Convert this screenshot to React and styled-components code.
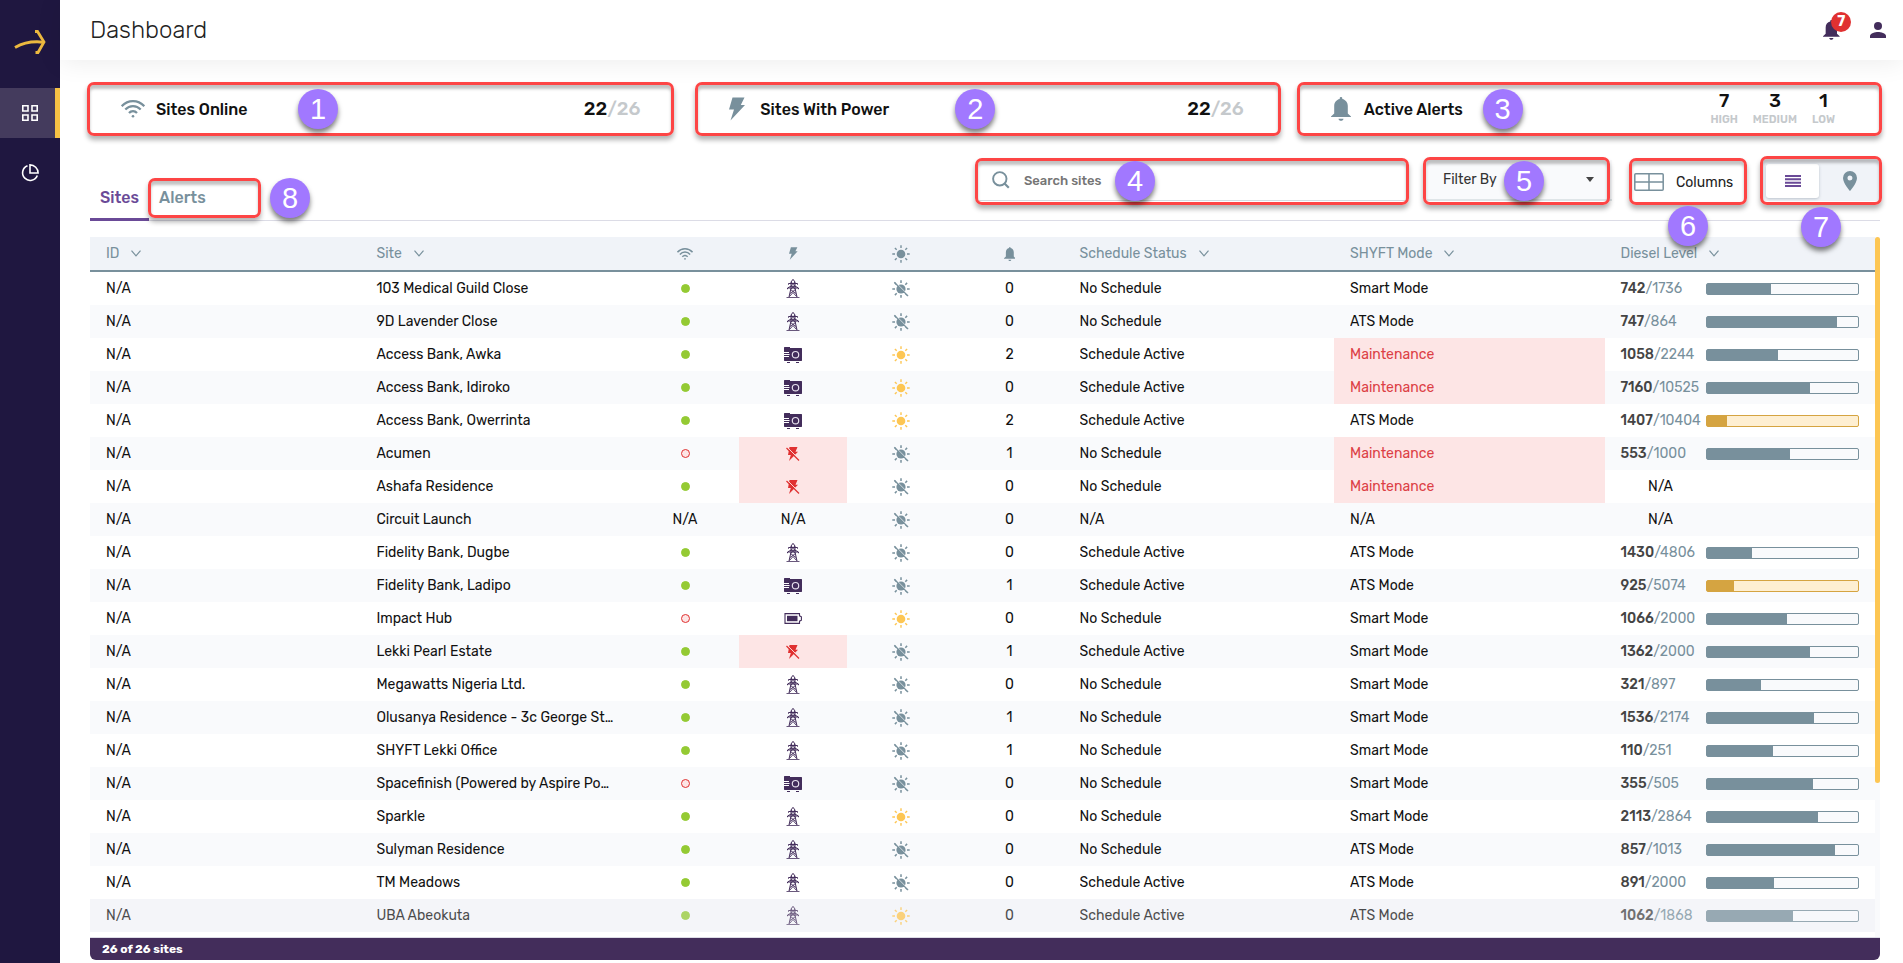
import React, { useState } from "react";
import styled, { createGlobalStyle, css } from "styled-components";

const colors = {
  night: "#1f1740",
  plum: "#432d5b",
  purple: "#6a4a97",
  slate: "#78909c",
  amber: "#f7c244",
  red: "#e03131",
  pink: "#fde5e5",
  stripe: "#f9fafc",
  panel: "#f0f3f8",
  line: "#dcdce6",
};

const GlobalStyle = createGlobalStyle`
  * { box-sizing: border-box; }
  body {
    margin: 0;
    background: #fff;
    color: #111;
    font-family: Rubik, Roboto, "Liberation Sans", sans-serif;
    font-size: 14px;
  }
  button, input, select {
    margin: 0;
    padding: 0;
    border: 0;
    background: none;
    color: inherit;
    font: inherit;
  }
  button { cursor: pointer; }
  svg { display: block; flex: none; }
`;

/* ---------- icons ---------- */

const LogoIcon = () => (
  <svg width="32" height="24" viewBox="0 0 32 24" fill="none" stroke="#ecb93f">
    <path d="M1 17.500C9 13 18 11 29 12.200" strokeWidth="3" />
    <path d="M21 1.500h2.500L30 12l-6 10.500h-2.500" strokeWidth="2.800" />
  </svg>
);

const GridIcon = () => (
  <svg width="16" height="16" viewBox="0 0 16 16" fill="none" stroke="#fff" strokeWidth="1.600">
    <path d="M.8.800h5.200v5.200H.8zM10 .8h5.200v5.200H10zM.8 10h5.200v5.200H.8zM10 10h5.200v5.200H10z" />
  </svg>
);

const PieIcon = () => (
  <svg width="18" height="18" viewBox="0 0 18 18" fill="none" stroke="#fff" strokeWidth="1.600">
    <path d="M6.500 1.700A7.600 7.600 0 1 0 16.300 11.500" />
    <path d="M9 .9V9h8.100A8.100 8.100 0 0 0 9 .9z" />
  </svg>
);

const WifiIcon = ({ size = 24 }) => (
  <svg width={size} height={(size * 3) / 4} viewBox="0 0 24 18" fill="none" stroke={colors.slate} strokeWidth="2.200">
    <path d="M.7 6.200C7-.6 17-.6 23.300 6.200" />
    <path d="M4.300 9.600c4.300-4.600 11.100-4.600 15.400 0" />
    <path d="M8 13c2.200-2.500 5.800-2.500 8 0" />
    <circle cx="12" cy="16.200" r="1.300" fill={colors.slate} stroke="none" />
  </svg>
);

const BoltIcon = ({ size = 24 }) => (
  <svg width={(size * 2) / 3} height={size} viewBox="0 0 16 24" fill={colors.slate}>
    <path d="M3.500.500h12L11.800 8H16L1.500 23.500 5 12.500H0z" />
  </svg>
);

const BellIcon = ({ size = 24, color = colors.slate }) => (
  <svg width={(size * 5) / 6} height={size} viewBox="0 0 20 24" fill={color}>
    <path d="M10 0c.8 0 1.300.6 1.300 1.400v.5c3.400.7 5.500 3.600 5.500 7v7.500l3.200 3.100v.6H0v-.6l3.200-3.100V8.900c0-3.400 2.100-6.300 5.500-7v-.5C8.700.6 9.200 0 10 0zM7.500 21.700h5C12.300 23 11.300 23.800 10 23.800S7.700 23 7.500 21.700z" />
  </svg>
);

const PersonIcon = () => (
  <svg width="16" height="16" viewBox="0 0 16 16" fill={colors.plum}>
    <circle cx="8" cy="4" r="4" />
    <path d="M0 16v-2c0-2.700 5.300-4 8-4s8 1.300 8 4v2z" />
  </svg>
);

const SearchIcon = () => (
  <svg width="18" height="18" viewBox="0 0 18 18" fill="none" stroke={colors.slate} strokeWidth="1.900">
    <circle cx="7.800" cy="7.800" r="6.700" />
    <path d="M12.500 12.500l4.300 4.300" strokeWidth="2.200" />
  </svg>
);

const ColumnsIcon = () => (
  <svg width="30" height="18" viewBox="0 0 30 18" fill="none" stroke={colors.slate} strokeWidth="1.500">
    <rect x=".8" y=".8" width="28.400" height="16.400" rx="1" />
    <path d="M15 1v16M1 9h28" />
  </svg>
);

const ListIcon = () => (
  <svg width="16" height="12" viewBox="0 0 16 12" fill={colors.purple}>
    <path d="M0 0h16v2H0zM0 3.300h16v2H0zM0 6.700h16v2H0zM0 10h16v2H0z" />
  </svg>
);

const PinIcon = () => (
  <svg width="14" height="20" viewBox="0 0 14 20" fill={colors.slate}>
    <path fillRule="evenodd" d="M7 0a7 7 0 0 1 7 7c0 5.200-7 13-7 13S0 12.200 0 7a7 7 0 0 1 7-7zm0 4.500a2.500 2.500 0 1 0 0 5 2.500 2.500 0 0 0 0-5z" />
  </svg>
);

const ChevronIcon = () => (
  <svg width="10" height="7" viewBox="0 0 10 7" fill="none" stroke={colors.slate} strokeWidth="1.200">
    <path d="M.5.700L5 5.800 9.500.7" />
  </svg>
);

const CaretIcon = () => (
  <svg width="8" height="5" viewBox="0 0 8 5" fill="#444">
    <path d="M0 0h8L4 5z" />
  </svg>
);

const rays =
  "M9 .3v2.700M9 15v2.700M.3 9H3M15 9h2.700M2.900 2.900l1.800 1.800M13.300 13.300l1.800 1.800M15.100 2.900l-1.800 1.800M4.700 13.300l-1.800 1.800";

const SunIcon = ({ color = "#fdc653" }) => (
  <svg width="18" height="18" viewBox="0 0 18 18" stroke={color} strokeWidth="1.400">
    <circle cx="9" cy="9" r="4.300" fill={color} stroke="none" />
    <path d={rays} />
  </svg>
);

const SunOffIcon = ({ backdrop }) => (
  <svg width="18" height="18" viewBox="0 0 18 18" stroke={colors.slate} strokeWidth="1.500">
    <circle cx="9" cy="9" r="4.600" fill={colors.slate} stroke="none" />
    <path d={rays} />
    <path d="M4.300 3.100L15.800 14.600" stroke={backdrop} strokeWidth="1" />
    <path d="M2.300 2.300l13.800 13.800" strokeWidth="1.300" />
  </svg>
);

const PylonIcon = () => (
  <svg width="14" height="19" viewBox="0 0 14 19" fill="none" stroke={colors.plum} strokeWidth="1">
    <path d="M7 .3L5 3v6L3 18M7 .3L9 3v6l2 9" />
    <path d="M2.500 4.500h9M2.500 4.500v1.200M11.500 4.500v1.200M1.500 9h11M1.500 9v1.200M12.500 9v1.200M2 8.700l3-1.500h4l3 1.500" />
    <path d="M5 3l4 3.500M9 3L5 6.500M5 6.500L9 10M9 6.500L5 10M4.500 10.500l5.500 4M9.500 10.500l-5.500 4M3.500 17.500l3.500-4 3.500 4" strokeWidth=".9" />
    <path d="M.5 18.500h13" strokeWidth=".8" />
  </svg>
);

const GeneratorIcon = () => (
  <svg width="18" height="16" viewBox="0 0 18 16" fill={colors.plum}>
    <path d="M.5 0H6v1h11.500l.5.500v12l-.5.500H.5l-.5-.5V.5zM3 14.900h3v1H3zM12 14.900h3v1h-3z" />
    <path d="M0 5.500h5M0 7.500h5.500M0 9.500h5" stroke="#fff" strokeWidth="1" />
    <circle cx="11.500" cy="7.700" r="3.200" fill="none" stroke="#e8e2ee" strokeWidth="1.200" />
  </svg>
);

const BatteryIcon = () => (
  <svg width="18" height="11" viewBox="0 0 18 11">
    <path d="M1 .6h14.500v2.200l1.900 1v3.400l-1.900 1v2.200H1z" fill="none" stroke={colors.plum} strokeWidth="1.100" />
    <path d="M3 2.800h10.500v5.400H3z" fill={colors.plum} />
  </svg>
);

const BoltOffIcon = () => (
  <svg width="14" height="14" viewBox="0 0 14 14">
    <path d="M3.500 0H11.500L9.500 4.800h2.500L3 14l1.800-6H2z" fill={colors.red} />
    <path d="M1.500.500l12.500 12.500" stroke={colors.pink} strokeWidth="1" />
    <path d="M.5 1l12.500 12.500" stroke={colors.red} strokeWidth="1.200" />
  </svg>
);

/* ---------- numbered callouts ---------- */

const Frame = styled.div`
  position: absolute;
  inset: ${({ $inset }) => $inset};
  z-index: 2;
  border: 3px solid #fd4545;
  border-radius: 7px;
  box-shadow: 0 4px 5px rgba(0, 0, 0, 0.3), inset 0 4px 3px rgba(0, 0, 0, 0.24);
  pointer-events: none;
`;

const Badge = styled.div`
  position: absolute;
  left: ${({ $left }) => $left}px;
  top: ${({ $top }) => $top}px;
  z-index: 3;
  width: 40px;
  height: 40px;
  border-radius: 50%;
  background: #a178ff;
  box-shadow: 0 4px 5px rgba(0, 0, 0, 0.5);
  color: #fff;
  font: 29px/41px "Liberation Sans", Arial, sans-serif;
  text-align: center;
  pointer-events: none;
`;

const Callout = ({ n, inset, left, top }) => (
  <>
    <Frame $inset={inset} />
    <Badge $left={left} $top={top}>
      {n}
    </Badge>
  </>
);

/* ---------- shell ---------- */

const Page = styled.div`
  display: flex;
  min-height: 100vh;
`;

const Sidebar = styled.nav`
  flex: none;
  width: 60px;
  display: flex;
  flex-direction: column;
  gap: 10px;
  background: ${colors.night};
`;

const Brand = styled.a`
  display: flex;
  justify-content: center;
  height: 78px;
  padding-top: 30px;
`;

const NavLink = styled.a`
  display: flex;
  align-items: center;
  justify-content: center;
  height: 50px;
  ${({ $active }) =>
    $active &&
    css`
      background: #443b5d;
      box-shadow: inset -5px 0 ${colors.amber};
    `}
`;

const Main = styled.main`
  flex: 1;
  min-width: 0;
`;

const Header = styled.header`
  display: flex;
  align-items: center;
  height: 60px;
  padding: 0 17px 0 30px;
  box-shadow: 0 2px 26px rgba(0, 0, 0, 0.08);
`;

const Title = styled.h1`
  flex: 1;
  margin: 0;
  font-size: 24px;
  font-weight: 300;
  line-height: 28px;
  color: #222;
`;

const HeaderActions = styled.div`
  display: flex;
  align-items: center;
  gap: 30px;
`;

const HeaderButton = styled.button`
  position: relative;
`;

const Count = styled.span`
  position: absolute;
  left: 8px;
  top: -8px;
  width: 20px;
  border-radius: 50%;
  background: ${colors.red};
  color: #fff;
  font-size: 14px;
  font-weight: 700;
  line-height: 20px;
`;

const Content = styled.div`
  padding: 24px 23px 3px 30px;
`;

/* ---------- stat cards ---------- */

const Stats = styled.section`
  display: grid;
  grid-template-columns: repeat(3, 1fr);
  gap: 20px;
`;

const Card = styled.div`
  position: relative;
  display: flex;
  align-items: center;
  gap: ${({ $gap }) => $gap}px;
  height: 50px;
  padding: 0 33px 0 ${({ $indent }) => $indent}px;
`;

const CardTitle = styled.h2`
  flex: 1;
  margin: 0;
  font-size: 16px;
  font-weight: 500;
`;

const Figure = styled.strong`
  font-size: 19px;
  font-weight: 500;
  line-height: 20px;
`;

const Muted = styled.span`
  color: #c5c9cc;
`;

const Severities = styled.div`
  display: flex;
  gap: 15px;
  padding-right: 12px;
`;

const Severity = styled.div`
  display: flex;
  flex-direction: column;
  align-items: center;
  gap: 2px;
`;

const SeverityLabel = styled.span`
  color: #c5c9cc;
  font-size: 11px;
  font-weight: 600;
  line-height: 14px;
`;

/* ---------- toolbar ---------- */

const Toolbar = styled.div`
  display: flex;
  align-items: flex-end;
  justify-content: space-between;
  margin: 26px 0 16px;
  border-bottom: 1px solid ${colors.line};
`;

const Tabs = styled.div`
  display: flex;
  margin-bottom: -1px;
`;

const Tab = styled.div`
  position: relative;
`;

const TabButton = styled.button`
  height: 44px;
  padding: 0 10px;
  border-bottom: 3px solid ${({ $active }) => ($active ? colors.purple : "transparent")};
  color: ${({ $active }) => ($active ? colors.purple : colors.slate)};
  font-size: 16px;
  font-weight: 500;
`;

const Tools = styled.div`
  flex: 1;
  display: flex;
  justify-content: flex-end;
  gap: 20px;
  height: 41px;
  margin: 0 0 19px 120px;
`;

const SearchBox = styled.div`
  position: relative;
  flex: 0 1 428px;
  display: flex;
  align-items: center;
  gap: 14px;
  padding-left: 13px;
  border-bottom: 1px solid #d3dce2;
`;

const SearchInput = styled.input`
  flex: 1;
  min-width: 0;
  font-size: 13px;
  font-weight: 500;
  outline: none;
  &::placeholder {
    color: #757575;
    opacity: 1;
  }
`;

const FilterBox = styled.div`
  position: relative;
  flex: 0 1 185px;
  display: flex;
  align-items: center;
  background: ${colors.stripe};
  border-bottom: 2px solid #dfe5e8;
`;

const FilterSelect = styled.select`
  appearance: none;
  width: 100%;
  height: 39px;
  padding: 0 16px;
  color: #333;
`;

const CaretSlot = styled.span`
  position: absolute;
  right: 18px;
  pointer-events: none;
`;

const ColumnsBox = styled.div`
  position: relative;
  flex: none;
  display: flex;
`;

const ColumnsButton = styled.button`
  display: flex;
  align-items: center;
  gap: 12px;
  width: 110px;
  padding: 3px 0 0 2px;
  color: #222;
`;

const Toggle = styled.div`
  position: relative;
  flex: none;
  display: grid;
  grid-template-columns: 1fr 1fr;
  gap: 4px;
  width: 118px;
  padding: 4px 4px 3px;
  background: ${colors.panel};
`;

const ToggleButton = styled.button`
  display: flex;
  align-items: center;
  justify-content: center;
  border-radius: 3px;
  ${({ $active }) =>
    $active &&
    css`
      background: #fff;
      box-shadow: 0 1px 3px rgba(60, 80, 100, 0.3);
    `}
`;

/* ---------- table ---------- */

const TableArea = styled.div`
  display: flex;
  padding-bottom: 5px;
  border-bottom: 1px solid ${colors.line};
`;

const TablePane = styled.div`
  flex: 1;
  min-width: 0;
`;

const Table = styled.table`
  width: 100%;
  table-layout: fixed;
  border-spacing: 0;
`;

const HeadCell = styled.th`
  width: ${({ $narrow }) => ($narrow ? "6.06%" : "auto")};
  height: 35px;
  padding: 0 16px;
  background: ${colors.panel};
  border-bottom: 2px solid ${colors.slate};
  color: ${colors.slate};
  font-weight: 400;
  text-align: left;
`;

const SortButton = styled.button`
  display: flex;
  align-items: center;
  gap: 12px;
`;

const IconSlot = styled.span`
  display: flex;
  justify-content: center;
`;

const Row = styled.tr`
  background: ${({ $faded }) => ($faded ? "#f4f5f9" : "#fff")};
  &:nth-child(even) {
    background: ${({ $faded }) => ($faded ? "#f4f5f9" : colors.stripe)};
  }
  td > * {
    opacity: ${({ $faded }) => ($faded ? 0.75 : 1)};
  }
`;

const Cell = styled.td`
  height: 33px;
  padding: 0 16px;
  ${({ $alert }) =>
    $alert &&
    css`
      background: ${colors.pink};
      color: #dc3f45;
    `}
`;

const CellText = styled.div`
  overflow: hidden;
  text-overflow: ellipsis;
  white-space: nowrap;
`;

const Dot = styled.span`
  width: 9px;
  height: 9px;
  border-radius: 50%;
  border: 1px solid ${({ $on }) => ($on ? "#94ca33" : colors.red)};
  background: ${({ $on }) => ($on ? "#94ca33" : colors.pink)};
`;

const Level = styled.div`
  display: flex;
  align-items: center;
`;

const Reading = styled.span`
  flex: none;
  width: 80px;
  margin-right: 5px;
  color: ${colors.slate};
  white-space: nowrap;
  text-align: ${({ $empty }) => ($empty ? "center" : "left")};
  ${({ $empty }) => $empty && "color: #111;"}
  b {
    color: #444;
    font-weight: 500;
  }
`;

const Bar = styled.div`
  flex: 1;
  height: 12px;
  border: 1px solid ${({ $low }) => ($low ? "#d5a441" : colors.slate)};
  border-radius: 2px;
  background: ${({ $low }) => ($low ? "#feefd2" : colors.stripe)};
`;

const Fill = styled.div`
  height: 100%;
  background: ${({ $low }) => ($low ? "#d5a441" : colors.slate)};
`;

const ScrollTrack = styled.div`
  flex: none;
  width: 5px;
  margin-bottom: -5px;
  background: ${colors.stripe};
`;

const ScrollThumb = styled.div`
  height: 78%;
  border-radius: 3px;
  background: #fdc653;
`;

const Footer = styled.footer`
  padding: 0 12px;
  border-radius: 0 0 6px 6px;
  background: ${colors.plum};
  color: #fff;
  font-size: 12px;
  font-weight: 700;
  line-height: 22px;
`;

/* site, online, power, sun, alerts, schedule, mode, litres, capacity */
const sites = [
  ["103 Medical Guild Close", true, "grid", false, 0, "No Schedule", "Smart Mode", 742, 1736],
  ["9D Lavender Close", true, "grid", false, 0, "No Schedule", "ATS Mode", 747, 864],
  ["Access Bank, Awka", true, "gen", true, 2, "Schedule Active", "Maintenance", 1058, 2244],
  ["Access Bank, Idiroko", true, "gen", true, 0, "Schedule Active", "Maintenance", 7160, 10525],
  ["Access Bank, Owerrinta", true, "gen", true, 2, "Schedule Active", "ATS Mode", 1407, 10404],
  ["Acumen", false, "off", false, 1, "No Schedule", "Maintenance", 553, 1000],
  ["Ashafa Residence", true, "off", false, 0, "No Schedule", "Maintenance"],
  ["Circuit Launch", null, null, false, 0, "N/A", "N/A"],
  ["Fidelity Bank, Dugbe", true, "grid", false, 0, "Schedule Active", "ATS Mode", 1430, 4806],
  ["Fidelity Bank, Ladipo", true, "gen", false, 1, "Schedule Active", "ATS Mode", 925, 5074],
  ["Impact Hub", false, "battery", true, 0, "No Schedule", "Smart Mode", 1066, 2000],
  ["Lekki Pearl Estate", true, "off", false, 1, "Schedule Active", "Smart Mode", 1362, 2000],
  ["Megawatts Nigeria Ltd.", true, "grid", false, 0, "No Schedule", "Smart Mode", 321, 897],
  ["Olusanya Residence - 3c George St…", true, "grid", false, 1, "No Schedule", "Smart Mode", 1536, 2174],
  ["SHYFT Lekki Office", true, "grid", false, 1, "No Schedule", "Smart Mode", 110, 251],
  ["Spacefinish (Powered by Aspire Po…", false, "gen", false, 0, "No Schedule", "Smart Mode", 355, 505],
  ["Sparkle", true, "grid", true, 0, "No Schedule", "Smart Mode", 2113, 2864],
  ["Sulyman Residence", true, "grid", false, 0, "No Schedule", "ATS Mode", 857, 1013],
  ["TM Meadows", true, "grid", false, 0, "Schedule Active", "ATS Mode", 891, 2000],
  ["UBA Abeokuta", true, "grid", true, 0, "Schedule Active", "ATS Mode", 1062, 1868],
];

const powerIcons = {
  grid: <PylonIcon />,
  gen: <GeneratorIcon />,
  battery: <BatteryIcon />,
  off: <BoltOffIcon />,
};

const SortHead = ({ children }) => (
  <HeadCell>
    <SortButton type="button">
      {children}
      <ChevronIcon />
    </SortButton>
  </HeadCell>
);

const IconHead = ({ label, children }) => (
  <HeadCell $narrow aria-label={label}>
    <IconSlot>{children}</IconSlot>
  </HeadCell>
);

const DieselLevel = ({ litres, capacity }) => {
  if (litres === undefined) {
    return (
      <Level>
        <Reading $empty>N/A</Reading>
      </Level>
    );
  }
  const ratio = litres / capacity;
  const low = ratio < 0.2;
  return (
    <Level>
      <Reading>
        <b>{litres}</b>/{capacity}
      </Reading>
      <Bar $low={low}>
        <Fill $low={low} style={{ width: `${ratio * 100}%` }} />
      </Bar>
    </Level>
  );
};

const SiteRow = ({ site, index }) => {
  const [name, online, power, sun, alerts, schedule, mode, litres, capacity] = site;
  return (
    <Row $faded={index === sites.length - 1}>
      <Cell>
        <CellText>N/A</CellText>
      </Cell>
      <Cell>
        <CellText>{name}</CellText>
      </Cell>
      <Cell>
        <IconSlot>{online === null ? "N/A" : <Dot $on={online} />}</IconSlot>
      </Cell>
      <Cell $alert={power === "off"}>
        <IconSlot>{power ? powerIcons[power] : "N/A"}</IconSlot>
      </Cell>
      <Cell>
        <IconSlot>
          {sun ? <SunIcon /> : <SunOffIcon backdrop={index % 2 ? colors.stripe : "#fff"} />}
        </IconSlot>
      </Cell>
      <Cell>
        <IconSlot>{alerts}</IconSlot>
      </Cell>
      <Cell>
        <CellText>{schedule}</CellText>
      </Cell>
      <Cell $alert={mode === "Maintenance"}>
        <CellText>{mode}</CellText>
      </Cell>
      <Cell>
        <DieselLevel litres={litres} capacity={capacity} />
      </Cell>
    </Row>
  );
};

const App = () => {
  const [tab, setTab] = useState("sites");
  const [view, setView] = useState("list");

  return (
    <Page>
      <GlobalStyle />
      <Sidebar>
        <Brand href="#home" aria-label="Home">
          <LogoIcon />
        </Brand>
        <NavLink href="#dashboard" aria-label="Dashboard" $active>
          <GridIcon />
        </NavLink>
        <NavLink href="#reports" aria-label="Reports">
          <PieIcon />
        </NavLink>
      </Sidebar>

      <Main>
        <Header>
          <Title>Dashboard</Title>
          <HeaderActions>
            <HeaderButton type="button" aria-label="Notifications">
              <BellIcon size={20} color={colors.plum} />
              <Count>7</Count>
            </HeaderButton>
            <HeaderButton type="button" aria-label="Account">
              <PersonIcon />
            </HeaderButton>
          </HeaderActions>
        </Header>

        <Content>
          <Stats>
            <Card $indent={31} $gap={11}>
              <WifiIcon />
              <CardTitle>Sites Online</CardTitle>
              <Figure>
                22<Muted>/26</Muted>
              </Figure>
              <Callout n={1} inset="-2px -1px -2px -3px" left={208} top={5} />
            </Card>
            <Card $indent={36} $gap={15}>
              <BoltIcon />
              <CardTitle>Sites With Power</CardTitle>
              <Figure>
                22<Muted>/26</Muted>
              </Figure>
              <Callout n={2} inset="-2px -4px -2px 2px" left={262} top={5} />
            </Card>
            <Card $indent={34} $gap={13}>
              <BellIcon />
              <CardTitle>Active Alerts</CardTitle>
              <Severities>
                <Severity>
                  <Figure>7</Figure>
                  <SeverityLabel>HIGH</SeverityLabel>
                </Severity>
                <Severity>
                  <Figure>3</Figure>
                  <SeverityLabel>MEDIUM</SeverityLabel>
                </Severity>
                <Severity>
                  <Figure>1</Figure>
                  <SeverityLabel>LOW</SeverityLabel>
                </Severity>
              </Severities>
              <Callout n={3} inset="-2px -2px -2px 0" left={186} top={5} />
            </Card>
          </Stats>

          <Toolbar>
            <Tabs>
              <Tab>
                <TabButton type="button" $active={tab === "sites"} onClick={() => setTab("sites")}>
                  Sites
                </TabButton>
              </Tab>
              <Tab>
                <TabButton type="button" $active={tab === "alerts"} onClick={() => setTab("alerts")}>
                  Alerts
                </TabButton>
                <Callout n={8} inset="1px -45px 3px -1px" left={121} top={1} />
              </Tab>
            </Tabs>
            <Tools>
              <SearchBox>
                <SearchIcon />
                <SearchInput type="search" placeholder="Search sites" aria-label="Search sites" />
                <Callout n={4} inset="-2px -2px -5px -4px" left={136} top={1} />
              </SearchBox>
              <FilterBox>
                <FilterSelect aria-label="Filter By">
                  <option>Filter By</option>
                </FilterSelect>
                <CaretSlot>
                  <CaretIcon />
                </CaretSlot>
                <Callout n={5} inset="-3px 2px -6px -4px" left={77} top={1} />
              </FilterBox>
              <ColumnsBox>
                <ColumnsButton type="button">
                  <ColumnsIcon />
                  Columns
                </ColumnsButton>
                <Callout n={6} inset="-2px -5px -4px -3px" left={36} top={46} />
              </ColumnsBox>
              <Toggle>
                <ToggleButton
                  type="button"
                  aria-label="List view"
                  $active={view === "list"}
                  onClick={() => setView("list")}
                >
                  <ListIcon />
                </ToggleButton>
                <ToggleButton
                  type="button"
                  aria-label="Map view"
                  $active={view === "map"}
                  onClick={() => setView("map")}
                >
                  <PinIcon />
                </ToggleButton>
                <Callout n={7} inset="-4px -2px -4px -2px" left={39} top={47} />
              </Toggle>
            </Tools>
          </Toolbar>

          <TableArea>
            <TablePane>
              <Table>
                <thead>
                  <tr>
                    <SortHead>ID</SortHead>
                    <SortHead>Site</SortHead>
                    <IconHead label="Connection">
                      <WifiIcon size={16} />
                    </IconHead>
                    <IconHead label="Power">
                      <BoltIcon size={13} />
                    </IconHead>
                    <IconHead label="Solar">
                      <SunIcon color={colors.slate} />
                    </IconHead>
                    <IconHead label="Alerts">
                      <BellIcon size={14} />
                    </IconHead>
                    <SortHead>Schedule Status</SortHead>
                    <SortHead>SHYFT Mode</SortHead>
                    <SortHead>Diesel Level</SortHead>
                  </tr>
                </thead>
                <tbody>
                  {sites.map((site, index) => (
                    <SiteRow key={site[0]} site={site} index={index} />
                  ))}
                </tbody>
              </Table>
            </TablePane>
            <ScrollTrack>
              <ScrollThumb />
            </ScrollTrack>
          </TableArea>
          <Footer>26 of 26 sites</Footer>
        </Content>
      </Main>
    </Page>
  );
};

export default App;
